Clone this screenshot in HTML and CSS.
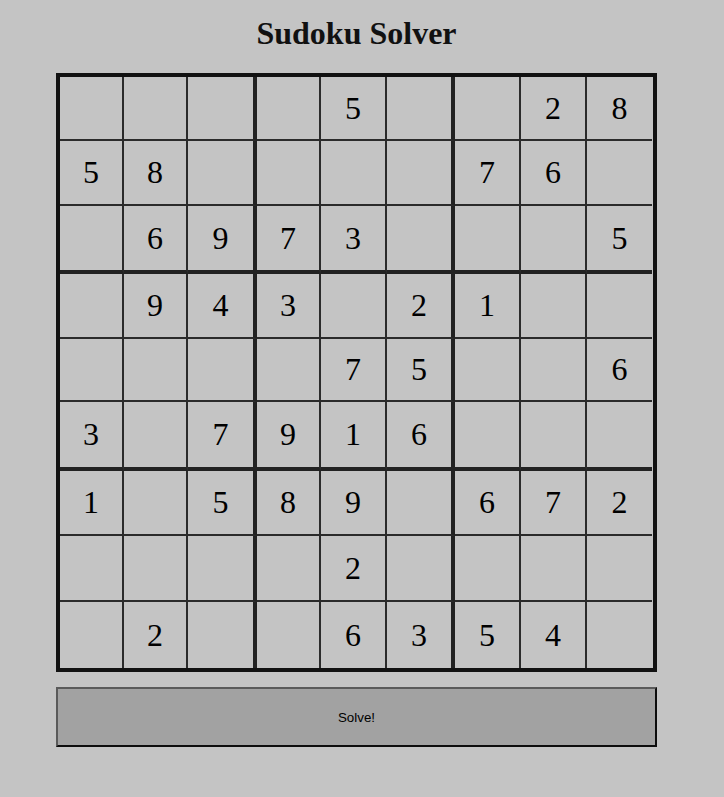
FILE: index.html
```html
<!DOCTYPE html>
<html lang="en">
<head>
<meta charset="utf-8">
<title>Sudoku Solver</title>
<link rel="stylesheet" href="styles.css">
</head>
<body>
<div class="page">
  <h1 class="title">Sudoku Solver</h1>
  <div class="board">
    <div class="cell"></div><div class="cell"></div><div class="cell"></div><div class="cell"></div><div class="cell">5</div><div class="cell"></div><div class="cell"></div><div class="cell">2</div><div class="cell">8</div>
    <div class="cell">5</div><div class="cell">8</div><div class="cell"></div><div class="cell"></div><div class="cell"></div><div class="cell"></div><div class="cell">7</div><div class="cell">6</div><div class="cell"></div>
    <div class="cell"></div><div class="cell">6</div><div class="cell">9</div><div class="cell">7</div><div class="cell">3</div><div class="cell"></div><div class="cell"></div><div class="cell"></div><div class="cell">5</div>
    <div class="cell"></div><div class="cell">9</div><div class="cell">4</div><div class="cell">3</div><div class="cell"></div><div class="cell">2</div><div class="cell">1</div><div class="cell"></div><div class="cell"></div>
    <div class="cell"></div><div class="cell"></div><div class="cell"></div><div class="cell"></div><div class="cell">7</div><div class="cell">5</div><div class="cell"></div><div class="cell"></div><div class="cell">6</div>
    <div class="cell">3</div><div class="cell"></div><div class="cell">7</div><div class="cell">9</div><div class="cell">1</div><div class="cell">6</div><div class="cell"></div><div class="cell"></div><div class="cell"></div>
    <div class="cell">1</div><div class="cell"></div><div class="cell">5</div><div class="cell">8</div><div class="cell">9</div><div class="cell"></div><div class="cell">6</div><div class="cell">7</div><div class="cell">2</div>
    <div class="cell"></div><div class="cell"></div><div class="cell"></div><div class="cell"></div><div class="cell">2</div><div class="cell"></div><div class="cell"></div><div class="cell"></div><div class="cell"></div>
    <div class="cell"></div><div class="cell">2</div><div class="cell"></div><div class="cell"></div><div class="cell">6</div><div class="cell">3</div><div class="cell">5</div><div class="cell">4</div><div class="cell"></div>
  </div>
  <button class="solve" type="button">Solve!</button>
</div>
</body>
</html>
```

FILE: styles.css
```css
html, body {
  margin: 0;
  padding: 0;
  background: #c4c4c4;
}

.page {
  width: 601px;
  margin-left: 56px;
  padding-top: 15px;
  display: flex;
  flex-direction: column;
}

.title {
  margin: 0;
  font-family: "Liberation Serif", "Times New Roman", serif;
  font-size: 32px;
  font-weight: bold;
  line-height: 37px;
  color: #111;
  text-align: center;
}

.board {
  margin-top: 21px;
  border: 4px solid #111;
  padding-right: 1px;
  display: grid;
  grid-template-columns: 64px 64px 69px 64px 66px 68px 66px 66px 65px;
  grid-template-rows: 64px 65px 68px 65px 63px 69px 65px 66px 66px;
}

.cell {
  display: flex;
  align-items: center;
  justify-content: center;
  border-right: 2px solid #2b2b2b;
  border-bottom: 2px solid #2b2b2b;
  font-family: "Liberation Serif", "Times New Roman", serif;
  font-size: 32px;
  color: #000;
}

.cell:nth-child(9n+3),
.cell:nth-child(9n+6) {
  border-right: 4px solid #222;
}

.cell:nth-child(9n) {
  border-right: none;
}

.cell:nth-child(n+19):nth-child(-n+27),
.cell:nth-child(n+46):nth-child(-n+54) {
  border-bottom: 4px solid #222;
}

.cell:nth-child(n+73) {
  border-bottom: none;
}

.solve {
  margin-top: 15px;
  height: 60px;
  width: 100%;
  background: #a2a2a2;
  border-style: solid;
  border-width: 2px;
  border-color: #5a5a5a #0d0d0d #0d0d0d #5a5a5a;
  font-family: "Liberation Sans", Arial, sans-serif;
  font-size: 13.33px;
  color: #000;
  padding: 0;
}
```
